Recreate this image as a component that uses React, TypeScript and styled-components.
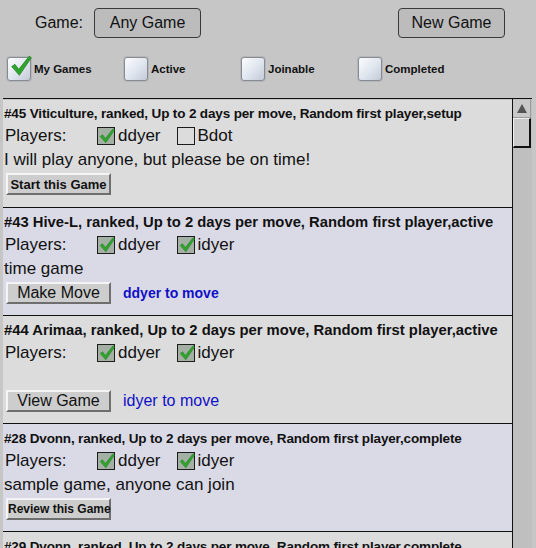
import React from "react";
import styled, { createGlobalStyle } from "styled-components";

const Global = createGlobalStyle`
  html, body { margin: 0; padding: 0; background: #c6c6c6; overflow: hidden; }
  body { font-family: "Liberation Sans", Arial, sans-serif; color: #111; }
`;

const Page = styled.div`
  width: 536px;
  height: 548px;
  display: flex;
  flex-direction: column;
  overflow: hidden;
`;

const Header = styled.div`
  display: flex;
  align-items: center;
  height: 30px;
  padding: 8px 31px 0 35px;
`;

const Label = styled.span`
  font-size: 16px;
  width: 59px;
  flex: none;
`;

const TopButton = styled.button`
  box-sizing: border-box;
  width: 107px;
  height: 30px;
  background: #bcbcbc;
  border: 1px solid #3a3a3a;
  border-radius: 4px;
  font-family: "Liberation Sans", Arial, sans-serif;
  font-size: 16px;
  color: #111;
  padding: 0;
  flex: none;
`;

const Spacer = styled.div`
  flex: 1;
`;

const Filters = styled.div`
  display: grid;
  grid-template-columns: repeat(4, 117px);
  margin: 19px 0 0 7px;
  height: 24px;
`;

const Filter = styled.label`
  display: flex;
  align-items: center;
  gap: 3px;
  font-size: 11.5px;
  font-weight: bold;
`;

const FancyBox = styled.span`
  position: relative;
  width: 22px;
  height: 22px;
  border: 1px solid #868b94;
  border-radius: 3px;
  background: linear-gradient(135deg, #fbfcfe 0%, #dfe5ee 55%, #c3cad6 100%);
  box-shadow: 0 0 0 1px #b6b6b6;
  flex: none;
`;

const FancyCheck = styled.svg`
  position: absolute;
  left: 2px;
  top: -4px;
`;

const Panel = styled.div`
  margin: 17px 0 0 3px;
  width: 529px;
  flex: 1;
  display: flex;
  border-top: 1px solid #111;
  overflow: hidden;
`;

const List = styled.div`
  flex: 1;
  display: flex;
  flex-direction: column;
  border-top: 1px solid #c6c6c6;
`;

const Row = styled.div<{ $alt?: boolean }>`
  flex: none;
  box-sizing: border-box;
  height: 108px;
  border-bottom: 1px solid #111;
  background: ${(p) => (p.$alt ? "#dadae6" : "#dcdcdc")};
  padding: 5px 0 0 1px;
  display: flex;
  flex-direction: column;
  &:first-child { height: 108px; padding-top: 4px; }
`;

const Title = styled.div<{ $narrow?: boolean }>`
  height: 19px;
  line-height: 19px;
  font-size: ${(p) => (p.$narrow ? "13.5px" : "14.8px")};
  letter-spacing: ${(p) => (p.$narrow ? "-0.15px" : "0")};
  font-weight: bold;
  white-space: nowrap;
`;

const Players = styled.div`
  display: flex;
  align-items: center;
  height: 22px;
  margin-top: 2px;
  font-size: 17px;
`;

const PlayersLabel = styled.span`
  width: 92px;
  padding-left: 1px;
`;

const Player = styled.span`
  display: flex;
  align-items: center;
  gap: 3px;
  margin-right: 16px;
`;

const SmallBox = styled.span<{ $on?: boolean }>`
  position: relative;
  width: 16px;
  height: 16px;
  border: 1px solid #1c1c1c;
  background: ${(p) => (p.$on ? "#a3b0a3" : "#dcdcdc")};
  flex: none;
`;

const SmallCheck = styled.svg`
  position: absolute;
  left: 1px;
  top: 0px;
`;

const Desc = styled.div`
  height: 22px;
  line-height: 22px;
  margin-top: 2px;
  font-size: 17px;
  white-space: nowrap;
`;

const Actions = styled.div`
  display: flex;
  align-items: center;
  margin-top: 2px;
  padding-left: 2px;
  gap: 12px;
`;

const RowButton = styled.button<{ $size: number; $bold?: boolean }>`
  box-sizing: border-box;
  width: 105px;
  height: 22px;
  padding: 0;
  background: #cdcdcd;
  border: 2px solid;
  border-color: #f4f4f4 #6e6e6e #6e6e6e #f4f4f4;
  font-family: "Liberation Sans", Arial, sans-serif;
  font-size: ${(p) => p.$size}px;
  font-weight: ${(p) => (p.$bold ? "bold" : "normal")};
  color: #111;
  white-space: nowrap;
`;

const ToMove = styled.span<{ $bold?: boolean }>`
  color: #1010c8;
  font-size: ${(p) => (p.$bold ? "14px" : "16px")};
  font-weight: ${(p) => (p.$bold ? "bold" : "normal")};
`;

const Scrollbar = styled.div`
  width: 19px;
  border-left: 1px solid #111;
  background: #bfbfbf;
  display: flex;
  flex-direction: column;
  padding-top: 1px;
`;

const ArrowButton = styled.div`
  height: 17px;
  width: 17px;
  background: #c9c9c9;
  border-right: 1px solid #9a9a9a;
  border-bottom: 1px solid #9a9a9a;
  display: flex;
  align-items: center;
  justify-content: center;
`;

const Thumb = styled.div`
  height: 27px;
  width: 15px;
  background: #c9c9c9;
  border: 1px solid #f0f0f0;
  border-right: 2px solid #111;
  border-bottom: 2px solid #111;
`;

const CHECK = "M1.5 10.5 L4.5 8.5 L8 13 L17.5 1 L19.5 2.5 L8.5 18.5 Z";

const filters = [
  { label: "My Games", on: true },
  { label: "Active", on: false },
  { label: "Joinable", on: false },
  { label: "Completed", on: false },
];

type Game = {
  title: string;
  narrow?: boolean;
  players: { name: string; on: boolean }[];
  desc: string;
  button: string;
  btnSize: number;
  btnBold?: boolean;
  toMove?: string;
  toMoveBold?: boolean;
};

const games: Game[] = [
  {
    title: "#45 Viticulture, ranked, Up to 2 days per move, Random first player,setup",
    narrow: true,
    players: [
      { name: "ddyer", on: true },
      { name: "Bdot", on: false },
    ],
    desc: "I will play anyone, but please be on time!",
    button: "Start this Game",
    btnSize: 13,
    btnBold: true,
  },
  {
    title: "#43 Hive-L, ranked, Up to 2 days per move, Random first player,active",
    players: [
      { name: "ddyer", on: true },
      { name: "idyer", on: true },
    ],
    desc: "time game",
    button: "Make Move",
    btnSize: 16,
    toMove: "ddyer to move",
    toMoveBold: true,
  },
  {
    title: "#44 Arimaa, ranked, Up to 2 days per move, Random first player,active",
    players: [
      { name: "ddyer", on: true },
      { name: "idyer", on: true },
    ],
    desc: "",
    button: "View Game",
    btnSize: 16,
    toMove: "idyer to move",
  },
  {
    title: "#28 Dvonn, ranked, Up to 2 days per move, Random first player,complete",
    narrow: true,
    players: [
      { name: "ddyer", on: true },
      { name: "idyer", on: true },
    ],
    desc: "sample game, anyone can join",
    button: "Review this Game",
    btnSize: 12,
    btnBold: true,
  },
  {
    title: "#29 Dvonn, ranked, Up to 2 days per move, Random first player,complete",
    narrow: true,
    players: [
      { name: "ddyer", on: true },
      { name: "idyer", on: true },
    ],
    desc: "",
    button: "Review this Game",
    btnSize: 12,
    btnBold: true,
  },
];

export default function App() {
  return (
    <Page>
      <Global />
      <Header>
        <Label>Game:</Label>
        <TopButton>Any Game</TopButton>
        <Spacer />
        <TopButton>New Game</TopButton>
      </Header>
      <Filters>
        {filters.map((f) => (
          <Filter key={f.label}>
            <FancyBox>
              {f.on && (
                <FancyCheck width="22" height="24" viewBox="0 0 20 20">
                  <path d={CHECK} fill="#2ea32e" stroke="#1c7a1c" strokeWidth="0.6" />
                </FancyCheck>
              )}
            </FancyBox>
            {f.label}
          </Filter>
        ))}
      </Filters>
      <Panel>
        <List>
          {games.map((g, i) => (
            <Row key={g.title} $alt={i % 2 === 1}>
              <Title $narrow={g.narrow}>{g.title}</Title>
              <Players>
                <PlayersLabel>Players:</PlayersLabel>
                {g.players.map((p) => (
                  <Player key={p.name}>
                    <SmallBox $on={p.on}>
                      {p.on && (
                        <SmallCheck width="16" height="16" viewBox="0 0 20 20">
                          <path d={CHECK} fill="#2ea32e" stroke="#1c7a1c" strokeWidth="0.6" />
                        </SmallCheck>
                      )}
                    </SmallBox>
                    {p.name}
                  </Player>
                ))}
              </Players>
              <Desc>{g.desc}</Desc>
              <Actions>
                <RowButton $size={g.btnSize} $bold={g.btnBold}>
                  {g.button}
                </RowButton>
                {g.toMove && <ToMove $bold={g.toMoveBold}>{g.toMove}</ToMove>}
              </Actions>
            </Row>
          ))}
        </List>
        <Scrollbar>
          <ArrowButton>
            <svg width="10" height="9" viewBox="0 0 10 9">
              <path d="M5 0 L10 9 L0 9 Z" fill="#555" />
            </svg>
          </ArrowButton>
          <Thumb />
        </Scrollbar>
      </Panel>
    </Page>
  );
}
